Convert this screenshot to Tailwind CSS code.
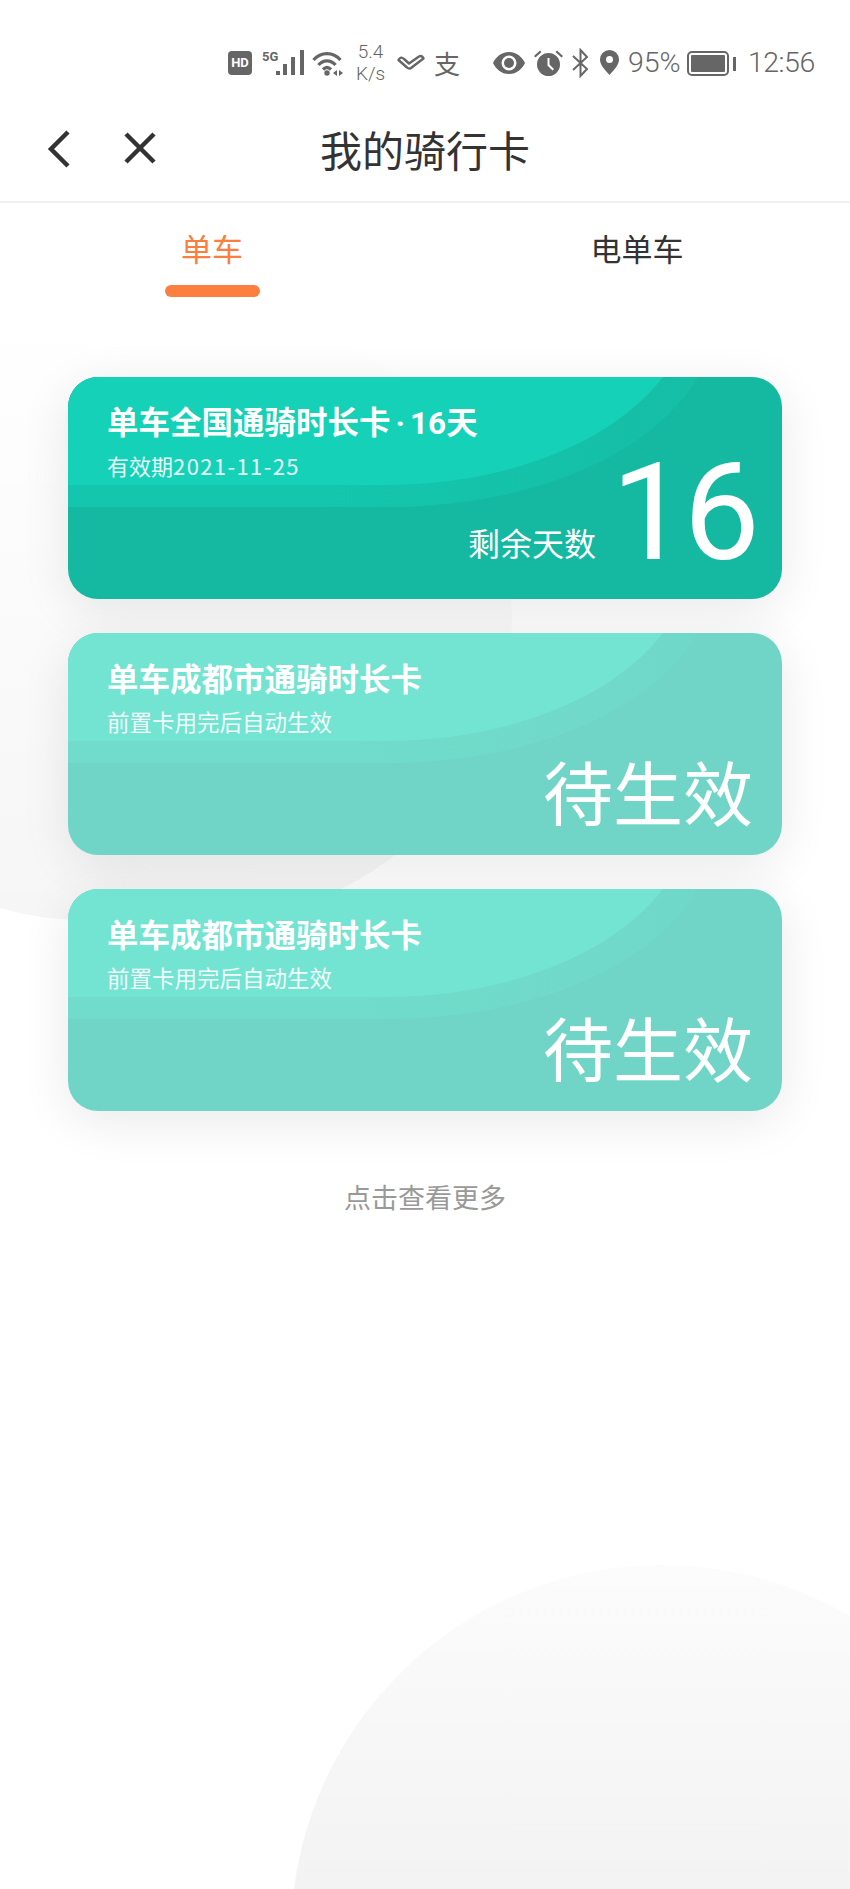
<!DOCTYPE html>
<html lang="zh-CN">
<head>
    <meta charset="UTF-8">
    <meta name="viewport" content="width=device-width, initial-scale=1.0">
    <title>我的骑行卡</title>
    <script src="https://cdn.jsdelivr.net/npm/@tailwindcss/browser@4"></script>
</head>
<body class="bg-white">
<div class="relative w-[850px] h-[1889px] overflow-hidden bg-white font-['Noto_Sans_CJK_SC','Noto_Sans',sans-serif]">
    <!-- background circles -->
    <div class="absolute left-[-220px] top-[310px] w-[732px] h-[610px] rounded-full bg-linear-to-b from-white to-[#f6f6f6]"></div>
    <div class="absolute left-[291px] top-[1565px] w-[742px] h-[742px] rounded-full bg-linear-to-b from-[#fcfcfc] to-[#e7e7e7]"></div>

    <div class="relative">
        <!-- Status bar -->
        <div class="h-[100px] flex items-start pt-[45px] text-[#666666] font-['Roboto',sans-serif]">
            <div class="ml-[228px] mt-[6px] w-[24px] h-[24px] rounded-[4px] bg-[#666666] text-white text-[13px] font-bold leading-[24px] text-center">HD</div>
            <svg class="ml-[10px] mt-[5px]" width="42" height="25" viewBox="0 0 42 25" fill="#666666">
                <text x="0" y="11" font-size="13" font-weight="700" font-family="Roboto">5G</text>
                <rect x="14" y="21" width="4" height="4"/>
                <rect x="21" y="14" width="4" height="11"/>
                <rect x="29" y="7" width="4" height="18"/>
                <rect x="38" y="0" width="4" height="25"/>
            </svg>
            <svg class="ml-[8px] mt-[5px]" width="32" height="26" viewBox="0 0 32 26" fill="none" stroke="#666666" stroke-width="3.200">
                <path d="M1.500 10C9 1.500 21 1.500 28.500 10"/>
                <path d="M6.500 15C11 9.500 19 9.500 23.500 15"/>
                <path d="M11 19.500C13.500 17 16.500 17 19 19.500"/>
                <circle cx="15" cy="23" r="2.700" fill="#666666" stroke="none"/>
                <path d="M25 20v6l-4-3zM27 20l4 3-4 3z" fill="#666666" stroke="none"/>
            </svg>
            <div class="ml-[11px] mt-[-4px] w-[31px] text-[19px] leading-[22px] font-light text-center">5.4<br>K/s</div>
            <svg class="ml-[11px] mt-[9px]" width="28" height="16" viewBox="0 0 28 16" fill="none" stroke="#666666" stroke-width="2.400" stroke-linejoin="round">
                <path d="M1.500 6C3 3 5 3 7 5L12 9.500L22 2.500C24 1 26 3 26.500 4.500L14 14C12.500 15 11 14.500 10 13.500Z"/>
            </svg>
            <div class="ml-[9px] mt-[3px] w-[26px] text-[26px] leading-[30px] font-['Noto_Sans_CJK_SC',sans-serif]">支</div>
            <svg class="ml-[33px] mt-[7px]" width="32" height="22" viewBox="0 0 32 22" fill="#666666">
                <path fill-rule="evenodd" d="M16 0C8 0 3 5 0 11C3 17 8 22 16 22C24 22 29 17 32 11C29 5 24 0 16 0ZM16 3.500A7.500 7.500 0 1 1 16 18.500A7.500 7.500 0 0 1 16 3.500Z"/>
                <circle cx="16" cy="11" r="5"/>
            </svg>
            <svg class="ml-[9px] mt-[5px]" width="29" height="27" viewBox="0 0 29 27" fill="#666666">
                <path fill-rule="evenodd" d="M14.500 3A11.500 11.500 0 1 0 14.500 26A11.500 11.500 0 0 0 14.500 3ZM13.500 8H15.500V14.500L20 19L18.500 20.500L13.500 15.500Z"/>
                <path d="M0 6L6 0.500L7.500 2L1.500 7.500ZM29 6L23 0.500L21.500 2L27.500 7.500Z"/>
            </svg>
            <svg class="ml-[8px] mt-[3px]" width="19" height="30" viewBox="0 0 19 30" fill="none" stroke="#666666" stroke-width="2">
                <path d="M2 8L16 21L9.500 28V2L16 9L2 22"/>
            </svg>
            <svg class="ml-[10px] mt-[5px]" width="19" height="25" viewBox="0 0 19 25" fill="#666666">
                <path fill-rule="evenodd" d="M9.500 0A9.500 9.500 0 0 0 0 9.500C0 15 5 20 9.500 25C14 20 19 15 19 9.500A9.500 9.500 0 0 0 9.500 0ZM9.500 6A3.500 3.500 0 1 1 9.500 13A3.500 3.500 0 0 1 9.500 6Z"/>
            </svg>
            <div class="ml-[9px] mt-[2px] w-[52px] text-[28.500px] leading-[32px] font-light whitespace-nowrap">95%</div>
            <div class="ml-[7px] mt-[6px] flex items-center">
                <div class="w-[42px] h-[25px] rounded-[5px] border-2 border-[#666666] p-[2px]">
                    <div class="w-full h-full rounded-[1px] bg-[#666666]"></div>
                </div>
                <div class="ml-[4px] w-[3px] h-[14px] bg-[#666666]"></div>
            </div>
            <div class="ml-[12px] mt-[2px] text-[28.500px] leading-[32px] font-light tracking-[-0.5px] whitespace-nowrap">12:56</div>
        </div>

        <!-- Header -->
        <div class="relative h-[103px] border-b-2 border-[#f0f0f0] flex items-center justify-center">
            <svg class="absolute left-[46px] top-[29px]" width="26" height="40" viewBox="0 0 26 40" fill="none" stroke="#333333" stroke-width="4.500">
                <path d="M22 3L5 20L22 37"/>
            </svg>
            <svg class="absolute left-[123px] top-[31px]" width="34" height="34" viewBox="0 0 34 34" fill="none" stroke="#333333" stroke-width="4.500">
                <path d="M3 3L31 31M31 3L3 31"/>
            </svg>
            <h1 class="text-[42px] leading-[50px] font-normal text-[#333333] mt-[-4px]">我的骑行卡</h1>
        </div>

        <!-- Tabs -->
        <div class="flex h-[96px]">
            <div class="w-[425px] flex flex-col items-center pt-[27px]">
                <span class="text-[31px] leading-[36px] text-[#fa7f3e] pr-[1px]">单车</span>
                <div class="mt-[19px] w-[95px] h-[12px] rounded-full bg-[#fd7f40]"></div>
            </div>
            <div class="w-[425px] flex flex-col items-center pt-[27px]">
                <span class="text-[31px] leading-[36px] text-[#333333] ml-[-1px]">电单车</span>
            </div>
        </div>

        <!-- Cards -->
        <div class="mt-[78px] px-[68px] flex flex-col gap-[34px]">
            <div class="relative h-[222px] w-[714px] rounded-[30px] bg-[#15b9a2] shadow-[0_10px_50px_rgba(0,0,0,0.09)] text-white">
                <svg class="absolute inset-0 rounded-[30px]" width="714" height="222" viewBox="0 0 714 222">
                    <defs>
                        <linearGradient id="midGreen" x1="0" y1="0" x2="1" y2="0">
                            <stop offset="0.4" stop-color="#13c6ad"/>
                            <stop offset="1" stop-color="#16bea6"/>
                        </linearGradient>
                    </defs>
                    <path d="M0 30A30 30 0 0 1 30 0H630C585 75 470 130 316 130H0Z" fill="url(#midGreen)"/>
                    <path d="M0 30A30 30 0 0 1 30 0H595C545 65 440 108 316 108H0Z" fill="#14d1b7"/>
                </svg>
                <div class="relative pl-[39px] pt-[21px]">
                    <p class="text-[31.500px] leading-[44px] font-bold whitespace-nowrap">单车全国通骑时长卡<span class="font-['Roboto',sans-serif]"><span class="mx-[5px]">·</span>16</span>天</p>
                    <p class="text-[22px] leading-[30px] mt-[4px] text-white/90 whitespace-nowrap">有效期<span class="tracking-[1.4px]">2021-11-25</span></p>
                </div>
                <div class="absolute right-[26px] bottom-[11px] flex items-baseline">
                    <span class="text-[32px] leading-[40px] mr-[15px] -translate-y-[3px]">剩余天数</span>
                    <span class="text-[136px] leading-[150px] font-normal tracking-[-4px] font-['Roboto',sans-serif]">16</span>
                </div>
            </div>
            <div class="relative h-[222px] w-[714px] rounded-[30px] bg-[#70d5c6] shadow-[0_10px_50px_rgba(0,0,0,0.09)] text-white">
                <svg class="absolute inset-0 rounded-[30px]" width="714" height="222" viewBox="0 0 714 222">
                    <defs>
                        <linearGradient id="midTeal" x1="0" y1="0" x2="1" y2="0">
                            <stop offset="0.4" stop-color="#71dccb"/>
                            <stop offset="1" stop-color="#70d8c8"/>
                        </linearGradient>
                    </defs>
                    <path d="M0 30A30 30 0 0 1 30 0H630C585 75 470 130 316 130H0Z" fill="url(#midTeal)"/>
                    <path d="M0 30A30 30 0 0 1 30 0H595C545 65 440 108 316 108H0Z" fill="#73e3d2"/>
                </svg>
                <div class="relative pl-[39px] pt-[22px]">
                    <p class="text-[31.500px] leading-[44px] font-bold whitespace-nowrap">单车成都市通骑时长卡</p>
                    <p class="text-[22.500px] leading-[30px] mt-[7px] text-white/90 whitespace-nowrap">前置卡用完后自动生效</p>
                </div>
                <p class="absolute right-[29px] bottom-[22px] text-[70px] leading-[84px]">待生效</p>
            </div>
            <div class="relative h-[222px] w-[714px] rounded-[30px] bg-[#70d5c6] shadow-[0_10px_50px_rgba(0,0,0,0.09)] text-white">
                <svg class="absolute inset-0 rounded-[30px]" width="714" height="222" viewBox="0 0 714 222">
                    <path d="M0 30A30 30 0 0 1 30 0H630C585 75 470 130 316 130H0Z" fill="url(#midTeal)"/>
                    <path d="M0 30A30 30 0 0 1 30 0H595C545 65 440 108 316 108H0Z" fill="#73e3d2"/>
                </svg>
                <div class="relative pl-[39px] pt-[22px]">
                    <p class="text-[31.500px] leading-[44px] font-bold whitespace-nowrap">单车成都市通骑时长卡</p>
                    <p class="text-[22.500px] leading-[30px] mt-[7px] text-white/90 whitespace-nowrap">前置卡用完后自动生效</p>
                </div>
                <p class="absolute right-[29px] bottom-[22px] text-[70px] leading-[84px]">待生效</p>
            </div>
        </div>

        <p class="mt-[68px] text-center text-[27px] leading-[36px] text-[#999999]">点击查看更多</p>
    </div>
</div>
</body>
</html>
